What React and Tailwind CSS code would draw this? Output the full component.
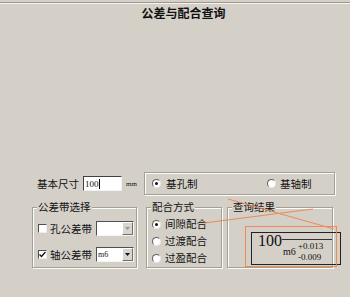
import React from 'react';

const Radio = ({ checked }) => (
  <span className="relative inline-block w-[9px] h-[9px] rounded-full bg-white border border-t-[#606060] border-l-[#606060] border-r-[#e8e6e0] border-b-[#e8e6e0] shrink-0">
    {checked && <span className="absolute left-[2px] top-[2px] w-[3px] h-[3px] rounded-full bg-[#111]" />}
  </span>
);

const Check = ({ checked }) => (
  <span className="flex items-center justify-center w-[9px] h-[9px] bg-white border border-t-[#505050] border-l-[#505050] border-r-[#eeeeee] border-b-[#eeeeee] shrink-0">
    {checked && (
      <svg width="7" height="7" viewBox="0 0 7 7">
        <path d="M0.5 3.5 L2.5 5.5 L6.5 1" stroke="#111" strokeWidth="1.3" fill="none" />
      </svg>
    )}
  </span>
);

const Combo = ({ value, enabled }) => (
  <div className="flex w-[38px] h-[15px] bg-white border border-t-[#505050] border-l-[#505050] border-r-[#f4f4f4] border-b-[#f4f4f4]">
    <div className="flex-1 pl-[1px] text-[8px] leading-[13px] font-['Liberation_Serif',serif]">{value}</div>
    <div className="w-[11px] h-full flex items-center justify-center bg-[#d8d5ce] border border-t-white border-l-white border-r-[#707070] border-b-[#707070]">
      <svg width="5" height="3" viewBox="0 0 5 3">
        <path d="M0 0 H5 L2.5 3 Z" fill={enabled ? '#111' : '#9a968e'} />
      </svg>
    </div>
  </div>
);

const Group = ({ title, className, children }) => (
  <div className={`relative border border-[#a3a098] shadow-[inset_1px_1px_0_#fbfbf8,1px_1px_0_#fbfbf8] ${className}`}>
    {title && (
      <span className="absolute -top-[8px] left-[4px] px-[1px] bg-[#d4d0c8] text-[10.5px] leading-[14px]">{title}</span>
    )}
    {children}
  </div>
);

export default function App() {
  return (
    <div className="relative w-[350px] h-[297px] overflow-hidden bg-[#d4d0c8] text-[#111] font-['Noto_Sans_CJK_SC',sans-serif]">
      <div className="mt-[2px] h-[2px] border-t border-[#9c988f] border-b border-b-[#f5f4f0]" />
      <div className="mt-[2px] pl-[17px] text-center text-[12px] leading-[14px] font-bold">公差与配合查询</div>

      <div className="mt-[152px] flex items-center pl-[37px] h-[23px]">
        <span className="w-[46px] text-[10.5px] leading-[14px]">基本尺寸</span>
        <div className="w-[39px] h-[15px] bg-white border border-t-[#404040] border-l-[#404040] border-r-[#f2f2f2] border-b-[#f2f2f2] flex items-center pl-[1px]">
          <span className="text-[9px] leading-[12px] font-['Liberation_Serif',serif]">100</span>
          <span className="w-px h-[10px] bg-black" />
        </div>
        <span className="ml-[4px] w-[14px] text-[7px] leading-[10px] font-['Liberation_Serif',serif]">mm</span>
        <Group className="ml-[4px] w-[191px] h-[23px] flex items-center">
          <div className="flex items-center pl-[7px] w-[122px]">
            <Radio checked />
            <span className="ml-[5px] text-[10.5px] leading-[14px]">基孔制</span>
          </div>
          <div className="flex items-center">
            <Radio />
            <span className="ml-[4px] text-[10.5px] leading-[14px]">基轴制</span>
          </div>
        </Group>
      </div>

      <div className="mt-[12px] flex pl-[32px]">
        <Group title="公差带选择" className="w-[105px] h-[61px] pt-[13px] pl-[5px]">
          <div className="flex items-center h-[15px]">
            <Check />
            <span className="ml-[3px] w-[46px] text-[10.5px] leading-[14px]">孔公差带</span>
            <Combo value="" />
          </div>
          <div className="mt-[11px] flex items-center h-[15px]">
            <Check checked />
            <span className="ml-[3px] w-[46px] text-[10.5px] leading-[14px]">轴公差带</span>
            <Combo value="m6" enabled />
          </div>
        </Group>

        <Group title="配合方式" className="ml-[9px] w-[76px] h-[61px] pt-[9px] pl-[5px] flex flex-col gap-[3px]">
          {['间隙配合', '过渡配合', '过盈配合'].map((t, i) => (
            <div key={t} className="flex items-center h-[14px]">
              <Radio checked={i === 0} />
              <span className="ml-[4px] text-[10.5px] leading-[14px]">{t}</span>
            </div>
          ))}
        </Group>

        <Group title="查询结果" className="ml-[5px] w-[106px] h-[61px] pt-[24px] pl-[23px]">
          <div className="w-[90px] h-[33px] border border-[#222] flex pl-[6px] pt-[1px]">
            <div className="flex items-start">
              <span className="text-[16px] leading-[14px] font-['Liberation_Serif',serif]">100</span>
              <div className="flex flex-col">
                <div className="mt-[5px] w-[50px] h-px bg-[#333]" />
                <div className="flex items-center mt-[1px]">
                  <span className="pl-[1px] w-[16px] text-[10px] leading-[12px] font-['Liberation_Serif',serif]">m6</span>
                  <div className="flex flex-col text-[9px] leading-[11px] font-['Liberation_Serif',serif]">
                    <span>+0.013</span>
                    <span>-0.009</span>
                  </div>
                </div>
              </div>
            </div>
          </div>
        </Group>
      </div>

      <svg className="absolute left-0 top-0 pointer-events-none" width="350" height="297" viewBox="0 0 350 297">
        <g stroke="#f0834a" strokeWidth="1" fill="none" opacity="0.9">
          <line x1="204" y1="223" x2="313" y2="209" />
          <line x1="228" y1="199" x2="334" y2="229" />
          <rect x="245.5" y="226.5" width="91" height="40" />
        </g>
      </svg>
    </div>
  );
}
